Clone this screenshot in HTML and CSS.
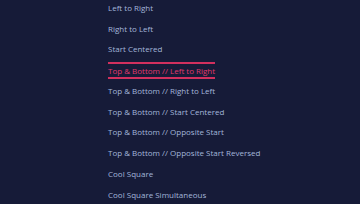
FILE: index.html
```html
<!DOCTYPE html>
<html>
<head>
<meta charset="utf-8">
<link rel="stylesheet" href="styles.css">
</head>
<body>
<ul class="menu">
  <li class="item">Left to Right</li>
  <li class="item">Right to Left</li>
  <li class="item">Start Centered</li>
  <li class="item active"><span class="label">Top &amp; Bottom // Left to Right</span></li>
  <li class="item">Top &amp; Bottom // Right to Left</li>
  <li class="item">Top &amp; Bottom // Start Centered</li>
  <li class="item">Top &amp; Bottom // Opposite Start</li>
  <li class="item">Top &amp; Bottom // Opposite Start Reversed</li>
  <li class="item">Cool Square</li>
  <li class="item">Cool Square Simultaneous</li>
</ul>
</body>
</html>
```
FILE: styles.css
```css
html, body {
  margin: 0;
  padding: 0;
  background: #161b38;
  width: 360px;
  height: 204px;
  overflow: hidden;
}
.menu {
  list-style: none;
  margin: -2.2px 0 0 0;
  padding: 0 0 0 108px;
  font-family: "Open Sans", sans-serif;
  font-size: 8px;
  color: #a3b6da;
}
.item {
  height: 20.75px;
  line-height: 20.75px;
  white-space: nowrap;
}
.active {
  color: #e0386c;
}
.active .label {
  display: inline-block;
  line-height: 13px;
  border-top: 2px solid #d2305e;
  border-bottom: 2px solid #d2305e;
  vertical-align: middle;
}
```
